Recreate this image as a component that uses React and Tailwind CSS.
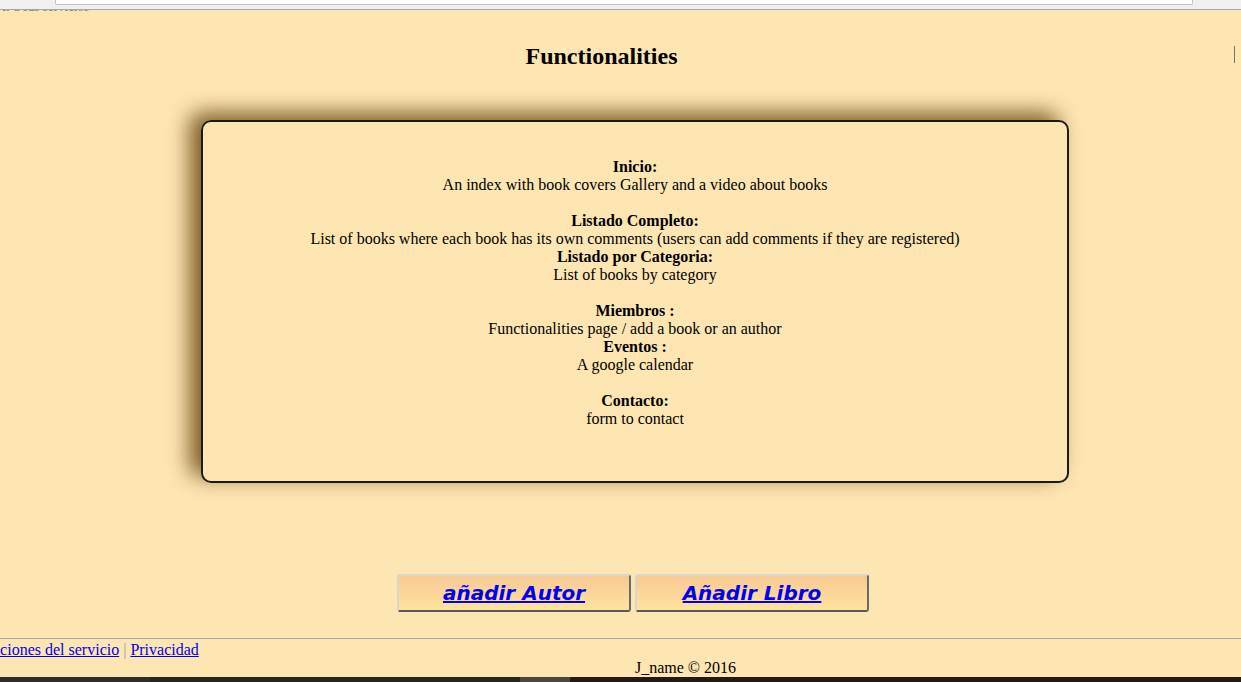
export default function App() {
  const items = [
    { title: 'Inicio:', text: 'An index with book covers Gallery and a video about books', gap: true },
    { title: 'Listado Completo:', text: 'List of books where each book has its own comments (users can add comments if they are registered)' },
    { title: 'Listado por Categoria:', text: 'List of books by category', gap: true },
    { title: 'Miembros :', text: 'Functionalities page / add a book or an author' },
    { title: 'Eventos :', text: 'A google calendar', gap: true },
    { title: 'Contacto:', text: 'form to contact' },
  ]

  return (
    <div className="w-[1241px] h-[682px] overflow-hidden bg-[#fee6b3] flex flex-col text-black" style={{ fontFamily: '"Liberation Serif", "Times New Roman", serif' }}>
      {/* restos de la barra del navegador */}
      <div className="h-[10px] shrink-0 bg-[#f0f0f0] border-b border-[#a9a9a9] flex">
        <div className="ml-[55px] w-[1138px] h-[5px] bg-white border border-t-0 border-[#c4c4c4] rounded-b-[2px]" />
      </div>
      <div className="h-[3px] overflow-hidden shrink-0">
        <div className="text-[13px] leading-[13px] text-[#777] -mt-[10px] ml-[2px]">Ir a sus servicios</div>
      </div>

      <div className="relative flex-1 flex flex-col">
        <h1 className="text-[24px] leading-[28px] font-bold text-center pr-[38px] mt-[29px]">Functionalities</h1>
        <div className="absolute right-[6px] top-[33px] w-px h-[17px] bg-[#777]" />

        <div className="mt-[50px] ml-[201px] w-[868px] h-[363px] border-2 border-[#1a1a1a] rounded-[10px] shadow-[-11px_-7px_22px_rgba(105,72,15,0.9)] pt-[36px] text-[16px] leading-[18px] text-center">
          {items.map((it) => (
            <div key={it.title} className={it.gap ? 'mb-[18px]' : ''}>
              <div className="font-bold">{it.title}</div>
              <div>{it.text}</div>
            </div>
          ))}
        </div>

        <div className="mt-[91px] ml-[397px] flex gap-[4px]">
          {['añadir Autor', 'Añadir Libro'].map((t) => (
            <a
              key={t}
              href="#"
              className="w-[234px] h-[38px] flex items-center justify-center rounded-[3px] border-2 border-t-[#d9d5cf] border-l-[#d9d5cf] border-r-[#6a6a6a] border-b-[#5a5a5a] bg-gradient-to-b from-[#f8c994] to-[#fee39f] text-[#0000ee] underline italic font-bold text-[20px]"
              style={{ fontFamily: '"Comic Sans MS", "DejaVu Sans", sans-serif' }}
            >
              {t}
            </a>
          ))}
        </div>

        <div className="mt-[26px] border-t border-[#a9a9a9]" />
        <div className="text-[16px] leading-[18px] mt-[2px] -ml-[39px] whitespace-nowrap">
          <a href="#" className="text-[#0000ee] underline">Condiciones del servicio</a>
          <span className="text-[#8aa] mx-[4px]">|</span>
          <a href="#" className="text-[#0000ee] underline">Privacidad</a>
        </div>
        <div className="text-[16px] leading-[18px] text-center pl-[130px]">J_name © 2016</div>
      </div>

      <div className="h-[5px] shrink-0 flex">
        <div className="w-[150px] bg-[#2d2d2d]" />
        <div className="w-[370px] bg-[#232621]" />
        <div className="w-[50px] bg-[#4a4644]" />
        <div className="flex-1 bg-[#231a18]" />
      </div>
    </div>
  )
}
